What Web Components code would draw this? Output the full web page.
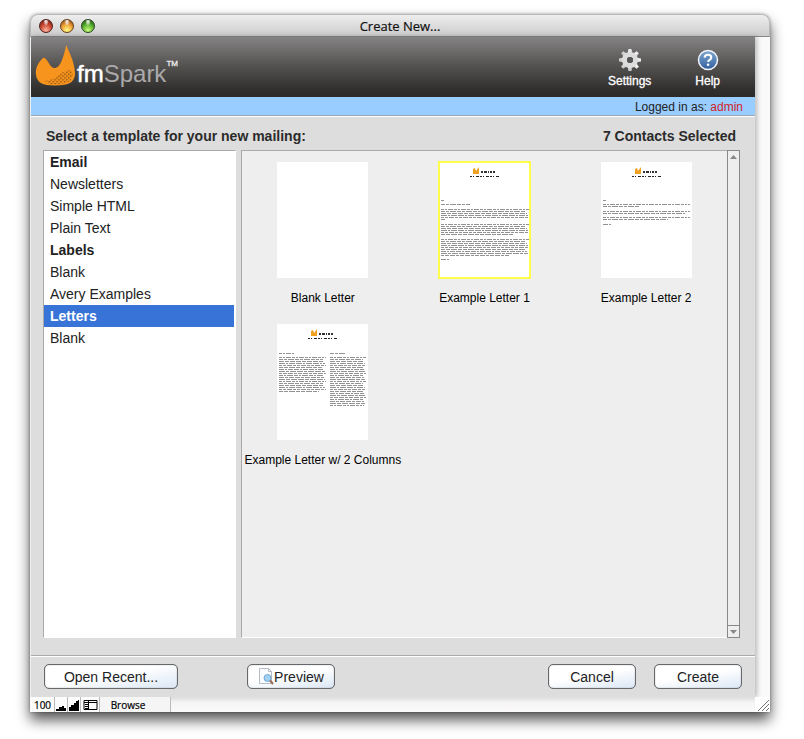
<!DOCTYPE html>
<html lang="en">
<head>
<meta charset="utf-8">
<title>Create New...</title>
<style>
html{height:100%}
body{margin:0;height:100%;background:#fff;font-family:"Liberation Sans",Arial,sans-serif;color:#222}
</style>
</head>
<body>
<create-window></create-window>
<script>
const define = (name, html, setup) => customElements.define(name, class extends HTMLElement {
  connectedCallback() {
    if (this.shadowRoot) return;
    this.attachShadow({mode: 'open'}).innerHTML = '<style>:host,*{box-sizing:border-box}button{font-family:inherit;margin:0}</style>' + html;
    if (setup) setup(this, this.shadowRoot);
  }
});

define('title-bar', `<style>
:host{display:grid;grid-template-columns:1fr auto 1fr;align-items:center;height:23px;padding:0 8px;border-radius:8px 8px 0 0;border:1px solid #b9b9b9;border-bottom-color:#888;background:linear-gradient(#eee,#ccc);color:#111}
div{display:flex;gap:7px}
button{width:14px;height:14px;border-radius:50%;padding:0;border:1px solid #555}
.c{background:radial-gradient(ellipse at 50% 10%,#fff 0,#fff8 18%,transparent 32%),radial-gradient(circle at 50% 85%,#ffb5a0,#c8452f 50%,#5c1710);border-color:#51201c}
.m{background:radial-gradient(ellipse at 50% 10%,#fff 0,#fff8 18%,transparent 32%),radial-gradient(circle at 50% 85%,#ffff86,#ee9d36 50%,#6e3510);border-color:#664019}
.z{background:radial-gradient(ellipse at 50% 10%,#fff 0,#fff8 18%,transparent 32%),radial-gradient(circle at 50% 85%,#caff78,#58ae31 50%,#174708);border-color:#23471c}
h1{margin:0;font:13px "Open Sans","Noto Sans",sans-serif;-webkit-text-stroke:.2px #111}
</style><div><button class="c" aria-label="Close"></button><button class="m" aria-label="Minimize"></button><button class="z" aria-label="Zoom"></button></div><h1><slot></slot></h1>`);

define('spark-logo', `<style>
:host{display:flex;align-items:flex-start;color:#aaa;font-size:24px;line-height:26px}
svg{width:41px;height:41px;margin-right:1px}
b{font-weight:400;color:#fff;-webkit-text-stroke:.5px #fff}
sup{font-size:8px;line-height:10px;color:#eee;align-self:flex-start;-webkit-text-stroke:.3px #eee}
.w{display:flex;height:42px;padding-top:14px;align-items:flex-end}
</style><svg viewBox="0 0 42 43" preserveAspectRatio="none" aria-hidden="true"><defs><pattern id="d" width="4" height="4" patternUnits="userSpaceOnUse"><path d="M0 0h1.300v1.300h-1.300zM2 2h1.300v1.300h-1.300z" fill="#6b3a0c"/></pattern></defs><path d="M9 13C4 17 0 24 1 31C2 40 8 42.500 20 42.500C34 42.500 40 40 41 31C41 19 36 10 32 0C30 9 27 23 21 24C15 25 14 15 9 13Z" fill="#f7941d"/><path d="M9 37Q16 38 22 33T36 26Q41 31 36 38Q29 42 14 41Z" fill="url(#d)"/></svg><div class="w"><span><b>fm</b>Spark</span><sup>TM</sup></div>`);

define('tool-button', `<style>
:host{display:block}
button{display:flex;flex-direction:column;align-items:center;gap:1px;border:0;padding:0;background:none;color:#fff;font-size:12px;line-height:16px;-webkit-text-stroke:.3px #fff}
::slotted(svg){width:24px;height:24px}
</style><button><slot name="icon"></slot><span><slot></slot></span></button>`);

define('app-header', `<style>
:host{display:flex;justify-content:space-between;height:60px;padding:8px 35px 8px 4px;background:linear-gradient(#858383 0,#5c5959 40%,#333130 85%,#2c2a29)}
nav{display:flex;gap:44px;padding-top:3px}
</style><spark-logo></spark-logo><nav>
<tool-button><svg slot="icon" viewBox="0 0 24 24"><defs><linearGradient id="g" x2="1" y2="1"><stop stop-color="#fff"/><stop offset="1" stop-color="#bdbdbd"/></linearGradient></defs><g fill="url(#g)"><path d="M10.500 1h3l1 6h-5zM10.500 23h3l1-6h-5z"/><path d="M10.500 1h3l1 6h-5zM10.500 23h3l1-6h-5z" transform="rotate(45 12 12)"/><path d="M10.500 1h3l1 6h-5zM10.500 23h3l1-6h-5z" transform="rotate(90 12 12)"/><path d="M10.500 1h3l1 6h-5zM10.500 23h3l1-6h-5z" transform="rotate(135 12 12)"/></g><circle cx="12" cy="12" r="5.500" fill="none" stroke="#dcdcdc" stroke-width="5"/><circle cx="12" cy="12" r="3" fill="#555"/></svg>Settings</tool-button>
<tool-button><svg slot="icon" viewBox="0 0 24 24"><defs><linearGradient id="h" x2="0" y2="1"><stop stop-color="#83a9d3"/><stop offset="1" stop-color="#315f9d"/></linearGradient></defs><circle cx="12" cy="12" r="9.500" fill="url(#h)" stroke="#f1f5f9" stroke-width="1.500"/><path d="M8.600 9.600Q8.800 6.800 12 6.800Q15.300 6.800 15.300 9.400Q15.300 11 13.400 12Q12.100 12.800 12.100 14" fill="none" stroke="#fff" stroke-width="2"/><circle cx="12.100" cy="16.800" r="1.300" fill="#fff"/></svg>Help</tool-button></nav>`);

define('login-bar', `<style>
:host{display:block;height:19px;padding:0 12px;text-align:right;font-size:12px;line-height:20px;background:#9cf;border-bottom:1px solid #9aa6b3;box-shadow:0 1px #fff;color:#222}
a{color:#d2232a;text-decoration:none}
</style>Logged in as: <a href="#admin"><slot></slot></a>`);

define('template-list', `<style>
:host{display:block;background:#fff;border:1px solid #aaa;border-right-color:#fff;border-bottom-color:#fff}
button{display:block;width:calc(100% - 1px);height:22px;padding:0 6px;border:0;background:none;text-align:left;font-size:14px;line-height:22px;color:#222}
.h{font-weight:700}
.s{background:#3874d8;color:#fff}
</style>`, (el, root) => {
  for (const [label, cls] of [['Email','h'],['Newsletters',''],['Simple HTML',''],['Plain Text',''],['Labels','h'],['Blank',''],['Avery Examples',''],['Letters','h s'],['Blank','']]) {
    const b = document.createElement('button');
    b.textContent = label; b.className = cls; root.append(b);
  }
});

const line = (x, y, w, k) => `<path d="M${x} ${y}h${w}" stroke-dasharray="${3 + k % 4} 1 ${2 + k % 3} 1 ${5 + k % 2} 1"/>`;
const block = (x, y, w, n, last) => Array.from({length: n}, (_, k) => line(x, y + k * 2, k === n - 1 ? last : w - (k * 7 % 4), k)).join('');
const brand = `<path d="M34 12V7l2-1 1 3 3-4v7z" fill="#f0a020" stroke="none"/><path d="M42 10h14" stroke="#333" stroke-width="2" stroke-dasharray="2 1 3 1 1 1"/><path d="M31 14.500h29" stroke="#222" stroke-dasharray="2 1 1 2 3 1"/>`;
const pages = {
  blank: '',
  one: brand + line(2,38.5,4,0) + line(2,42.5,29,1) + block(2,47.5,88,6,5) + block(2,62.5,88,6,72) + block(2,77.5,88,9,68) + line(2,97.5,8,2),
  two: brand + line(2,38.5,4,0) + block(2,42.5,87,2,36) + block(2,49.5,87,2,82) + block(2,55.5,87,2,65) + line(2,62.5,8,2),
  columns: brand + line(2,29.5,15,0) + line(53,29.5,15,1) + block(2,33.5,47,18,40) + block(53,33.5,36,25,34)
};
define('template-card', `<style>
:host{display:block;text-align:center;color:#000}
button{display:flex;flex-direction:column;align-items:center;gap:11px;width:100%;padding:0;border:0;background:none;color:#000;font-size:12px;line-height:18px;white-space:nowrap}
svg{width:91px;height:116px;background:#fff}
:host([selected]) svg{outline:2px solid #ffff4b;outline-offset:-1px}
</style><button><svg viewBox="0 0 91 116" fill="none" stroke="#929292" stroke-width="1" aria-hidden="true"></svg><span><slot></slot></span></button>`, (el, root) => {
  root.querySelector('svg').innerHTML = pages[el.getAttribute('page')];
});

define('scroll-track', `<style>
:host{display:flex;flex-direction:column;justify-content:space-between;width:13px;border:1px solid #888;background:#eee}
button{height:12px;padding:0;border:0;background:#eee;display:grid;place-items:center}
button:first-child{border-bottom:1px solid #888}button:last-child{border-top:1px solid #888}
svg{width:7px;height:4px;fill:#888}
</style><button aria-label="Scroll up"><svg viewBox="0 0 7 4"><path d="M0 4L3.500 0 7 4z"/></svg></button><button aria-label="Scroll down"><svg viewBox="0 0 7 4"><path d="M0 0h7L3.500 4z"/></svg></button>`);

define('template-gallery', `<style>
:host{display:flex;background:#eee;border-top:1px solid #aaa;border-left:1px solid #aaa;border-bottom:1px solid #fff}
div{flex:1;display:grid;grid-template-columns:repeat(auto-fill,minmax(160px,1fr));grid-auto-rows:162px;padding-top:11px;align-content:start}
scroll-track{margin:-1px 0}
</style><div><slot></slot></div><scroll-track></scroll-track>`);

define('push-button', `<style>
:host{display:block}
button{display:flex;align-items:center;justify-content:center;width:100%;height:25px;padding:0;border:1px solid #66686c;box-shadow:inset 0 0 1px #66686c;border-radius:5px;background:linear-gradient(170deg,#fff 45%,#dbe7f5);color:#222;font-size:14px;line-height:22px}
::slotted(svg){width:16px;height:17px;flex:none}
</style><button><slot></slot></button>`);

define('action-bar', `<style>
:host{display:flex;height:42px;align-items:center;padding:0 13px;border-top:1px solid #aaa;box-shadow:inset 0 1px #fff}
push-button{width:88px}
push-button:first-of-type{width:134px;margin-right:69px}
.g{flex:1}
push-button:last-of-type{margin-left:18px}
</style><push-button>Open Recent...</push-button><push-button><svg viewBox="0 0 16 17" aria-hidden="true"><path d="M1.500 .5h9l3 3v12h-12z" fill="#fafcff" stroke="#b5bcc5"/><path d="M10.500 .5v3h3" fill="none" stroke="#b5bcc5"/><circle cx="9.500" cy="10" r="3.500" fill="#a3d0f3" stroke="#6fa9da"/><path d="M12 12.500l3 3.500" stroke="#9a6a55" stroke-width="2"/></svg>Preview</push-button><div class="g"></div><push-button>Cancel</push-button><push-button>Create</push-button>`);

define('status-bar', `<style>
:host{display:flex;height:15px;background:linear-gradient(#ddd,#f5f3f4 35%,#fbfafb);color:#000;font:10px/14px "Open Sans","Noto Sans",sans-serif}
button{border:0;border-right:1px solid #bbb;background:#fcfcfc;padding:0}
button{display:grid;place-items:center;font:inherit;color:inherit;-webkit-text-stroke:.2px #000}
.n{width:24px}.i{width:13px}.p{width:19px}.m{width:71px;padding-right:14px;background:#f5f5f5}
.r{margin-left:auto;width:15px;background:#fff}
svg{display:block}
</style><button class="n">100</button><button class="i" aria-label="Zoom out"><svg width="12" height="12"><path d="M1 12v-2h3v-2h3v-1h2v2h2v3z"/></svg></button><button class="i" aria-label="Zoom in"><svg width="12" height="12"><path d="M1 12V8h2V6h3V4h2V2h2V1h1v11z"/></svg></button><button class="p" aria-label="Toggle toolbar"><svg width="15" height="12"><path d="M1 1.500h13v9H1zM5.500 1v10M1 3.500h13" fill="none" stroke="#000"/><path d="M3.500 3v8" stroke="#000" stroke-width="3" stroke-dasharray="1 1"/></svg></button><button class="m">Browse</button><svg class="r" width="15" height="15" stroke="#777"><path d="M3 14L14 3M7 14l7-7M11 14l3-3"/></svg>`);

define('create-window', `<style>
:host{display:flex;min-height:100%;padding:14px 34px 27px 30px}
.win{flex:1;display:flex;flex-direction:column;border-radius:8px 8px 0 0;box-shadow:0 8px 14px #000a,0 0 3px #0005;background:#fbfafb}
.body{flex:1;display:flex;flex-direction:column;margin:0 15px 0 1px;background:#ddd;box-shadow:2px 0 5px #0004}
.heads{display:flex;justify-content:space-between;padding:10px 19px 4px 15px}
h2{margin:0;font-size:14px;line-height:20px;color:#2b2b2b}
.panes{flex:1;display:flex;gap:5px;padding:0 15px 17px 12px}
template-list{width:193px}
template-gallery{flex:1}
status-bar{margin-left:1px}
</style><main class="win"><title-bar>Create New...</title-bar><div class="body"><app-header></app-header><login-bar>admin</login-bar><div class="heads"><h2>Select a template for your new mailing:</h2><h2>7 Contacts Selected</h2></div><div class="panes"><template-list></template-list><template-gallery><template-card page="blank">Blank Letter</template-card><template-card page="one" selected>Example Letter 1</template-card><template-card page="two">Example Letter 2</template-card><template-card page="columns">Example Letter w/ 2 Columns</template-card></template-gallery></div><action-bar></action-bar></div><status-bar></status-bar></main>`);
</script>
</body>
</html>
